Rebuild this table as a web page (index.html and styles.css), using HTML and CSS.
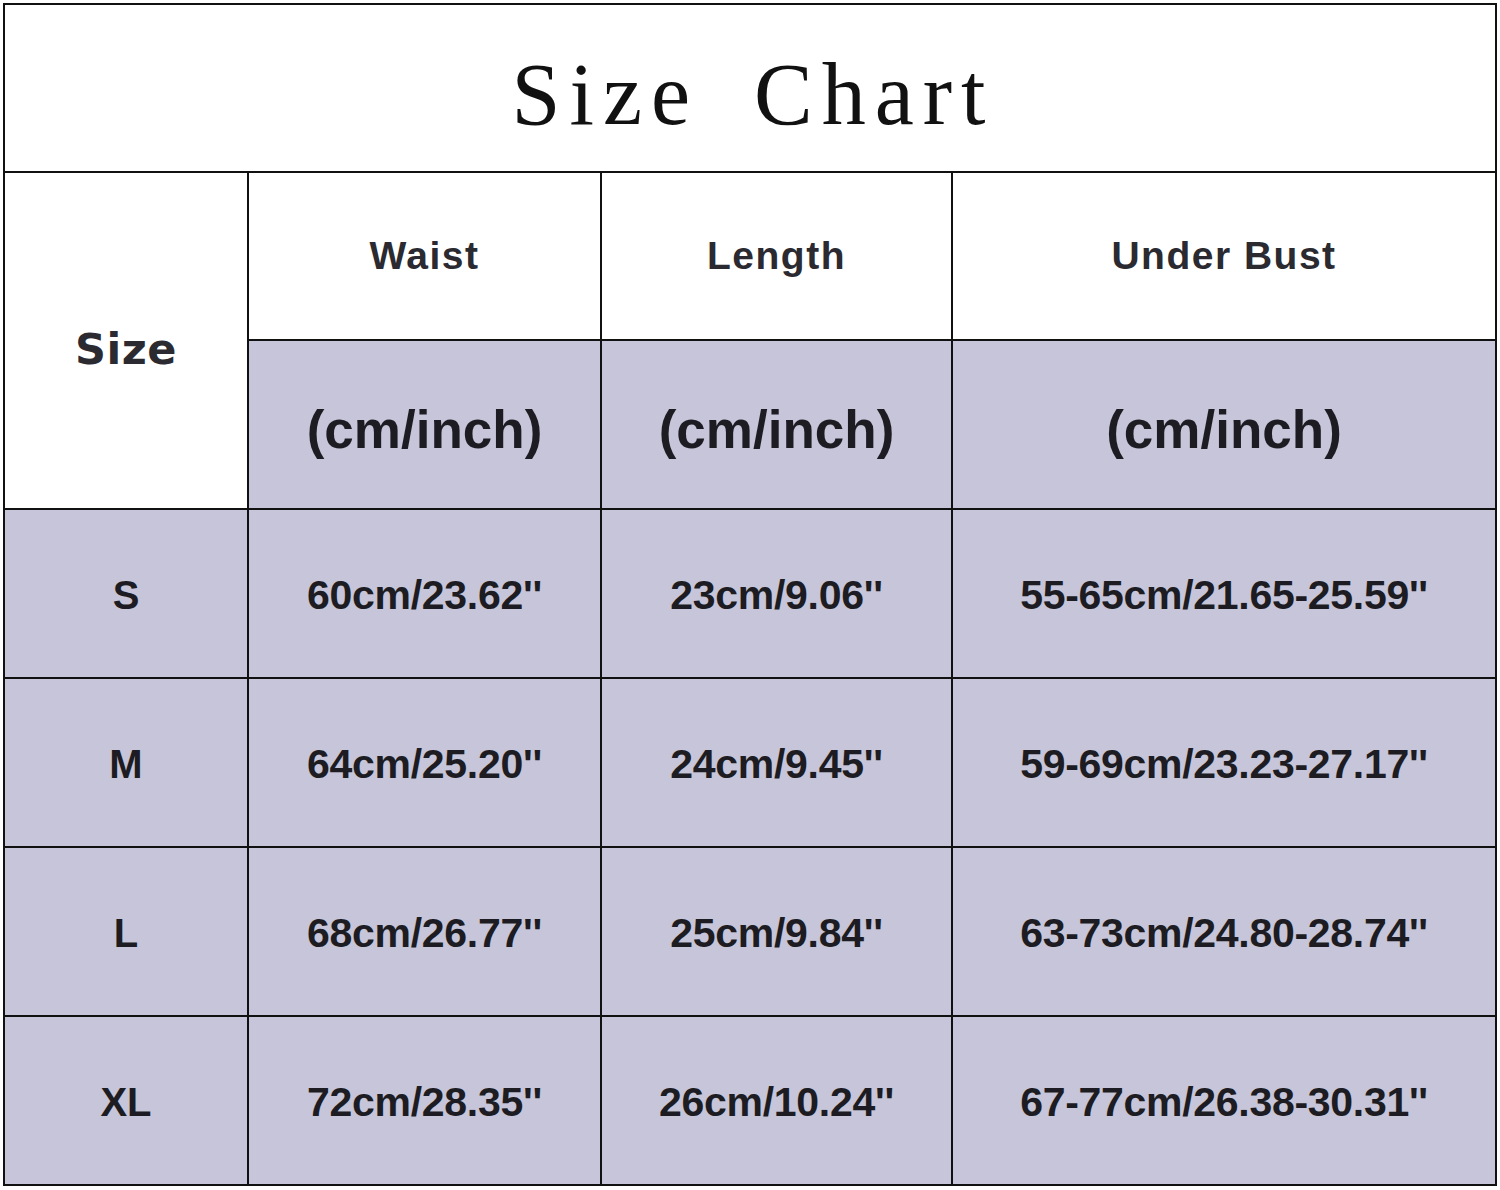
FILE: index.html
```html
<!DOCTYPE html>
<html>
<head>
<meta charset="utf-8">
<link rel="stylesheet" href="styles.css">
</head>
<body>
<div class="page">
<table class="chart">
  <colgroup>
    <col class="c1"><col class="c2"><col class="c3"><col class="c4">
  </colgroup>
  <tr>
    <td class="title" colspan="4"><span class="title-text">Size Chart</span></td>
  </tr>
  <tr>
    <td class="size-head" rowspan="2"><span class="size-head-text">Size</span></td>
    <td class="head">Waist</td>
    <td class="head">Length</td>
    <td class="head">Under Bust</td>
  </tr>
  <tr class="shade">
    <td class="unit">(cm/inch)</td>
    <td class="unit">(cm/inch)</td>
    <td class="unit">(cm/inch)</td>
  </tr>
  <tr class="shade">
    <td class="size">S</td>
    <td class="val">60cm/23.62''</td>
    <td class="val">23cm/9.06''</td>
    <td class="val">55-65cm/21.65-25.59''</td>
  </tr>
  <tr class="shade">
    <td class="size">M</td>
    <td class="val">64cm/25.20''</td>
    <td class="val">24cm/9.45''</td>
    <td class="val">59-69cm/23.23-27.17''</td>
  </tr>
  <tr class="shade">
    <td class="size">L</td>
    <td class="val">68cm/26.77''</td>
    <td class="val">25cm/9.84''</td>
    <td class="val">63-73cm/24.80-28.74''</td>
  </tr>
  <tr class="shade">
    <td class="size">XL</td>
    <td class="val">72cm/28.35''</td>
    <td class="val">26cm/10.24''</td>
    <td class="val">67-77cm/26.38-30.31''</td>
  </tr>
</table>
</div>
</body>
</html>
```
FILE: styles.css
```css
html, body {
  margin: 0;
  padding: 0;
  background: #ffffff;
}
.page {
  padding: 3px 0 0 3px;
}
.chart {
  border-collapse: collapse;
  table-layout: fixed;
  width: 1494px;
  font-family: "Liberation Sans", Arial, sans-serif;
  color: #1c1c22;
}
.c1 { width: 244px; }
.c2 { width: 353px; }
.c3 { width: 351px; }
.c4 { width: 544px; }
.chart td {
  border: 2px solid #111111;
  padding: 0;
  text-align: center;
  vertical-align: middle;
}
.title {
  background: #ffffff;
  height: 166px;
}
.title-text {
  display: inline-block;
  font-family: "Liberation Serif", "Times New Roman", serif;
  font-size: 88px;
  letter-spacing: 9px;
  word-spacing: 24px;
  color: #111111;
  padding-top: 12px;
  padding-left: 6px;
}
.size-head {
  background: #ffffff;
  font-family: "DejaVu Sans", sans-serif;
  font-weight: bold;
  font-size: 43px;
  color: #2a2a30;
}
.size-head-text {
  display: inline-block;
  padding-top: 16px;
  letter-spacing: 0.5px;
}
.head {
  background: #ffffff;
  height: 166px;
  font-weight: bold;
  font-size: 39px;
  letter-spacing: 1.5px;
  color: #2a2a30;
}
.shade td {
  background: #c6c5d9;
}
.unit {
  height: 157px;
  font-weight: bold;
  font-size: 53px;
  padding-top: 10px !important;
}
.size {
  height: 163px;
  font-weight: bold;
  font-size: 40px;
  padding-top: 4px !important;
}
.val {
  height: 163px;
  font-weight: bold;
  font-size: 41px;
  letter-spacing: -0.3px;
  padding-top: 4px !important;
}
```
